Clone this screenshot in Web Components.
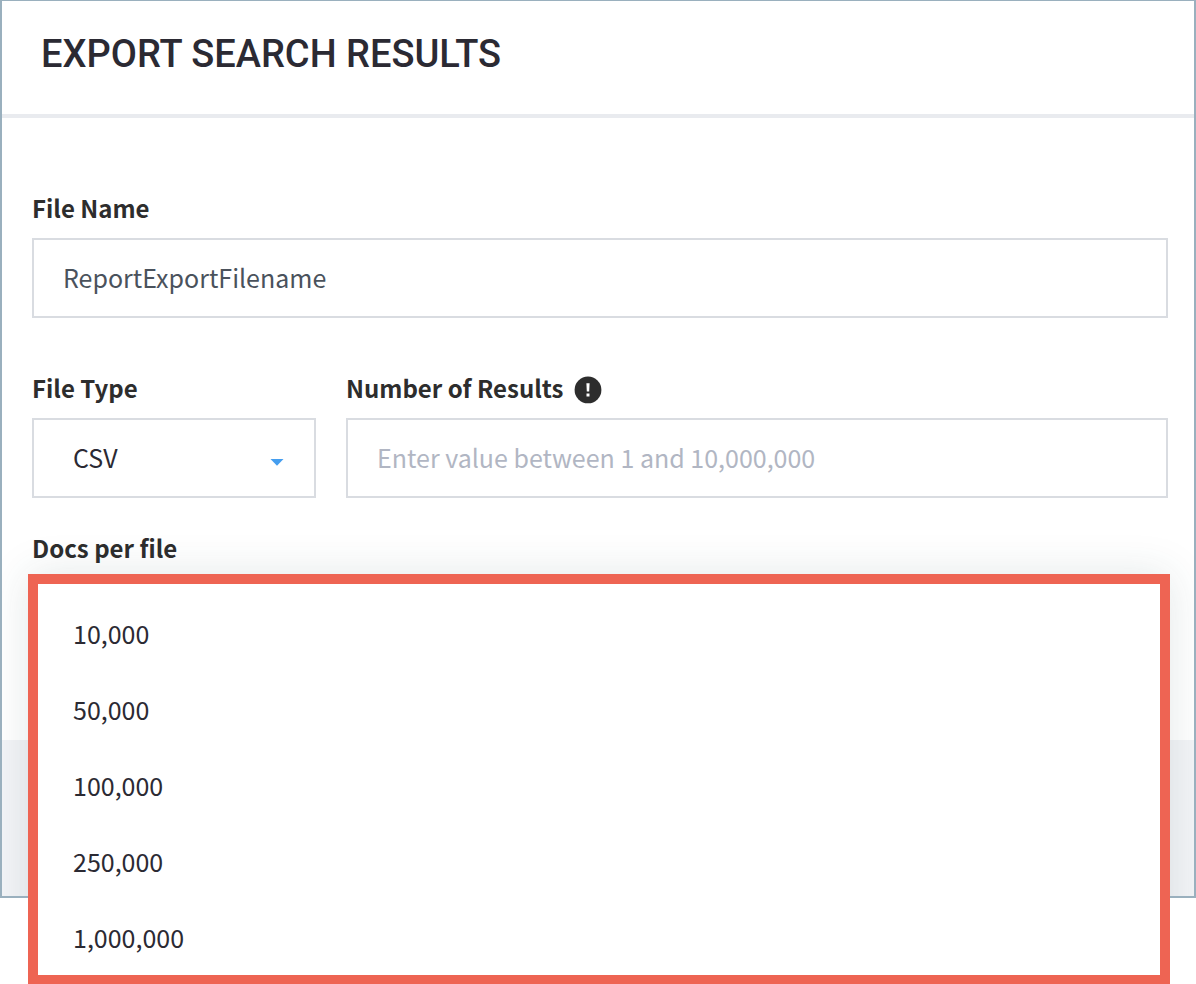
<!DOCTYPE html>
<html lang="en">
<head>
<meta charset="utf-8">
<meta name="viewport" content="width=device-width, initial-scale=1">
<title>Export Search Results</title>
<style>
  body { margin: 0; min-height: 100vh; background: #fff; color: #2b2a33; font: 400 25px/36px "Noto Sans CJK SC", "Noto Sans", sans-serif; }
</style>
</head>
<body>
<export-dialog>
  <span slot="title">EXPORT SEARCH RESULTS</span>
  <text-field label="File Name" value="ReportExportFilename"></text-field>
  <field-row>
    <select-field label="File Type" options="CSV"></select-field>
    <text-field label="Number of Results" placeholder="Enter value between 1 and 10,000,000" info></text-field>
  </field-row>
  <option-menu label="Docs per file" options="10,000|50,000|100,000|250,000|1,000,000"></option-menu>
</export-dialog>

<script>
const fieldStyles = `
  :host { display: block; min-width: 0; }
  * { box-sizing: border-box; }
  .caption { display: flex; align-items: center; gap: 11px; margin: 0 0 12px; height: 36px; }
  label, .label { color: #2d2d2d; font-size: 24px; font-weight: 700; white-space: nowrap; }
`;

customElements.define('export-dialog', class extends HTMLElement {
  connectedCallback() {
    this.attachShadow({ mode: 'open' }).innerHTML = `
      <style>
        :host { display: block; border: 2px solid #9ab0be; border-top-width: 1px; }
        header { padding: 29px 39px 36px; border-bottom: 4px solid #e9ebef; }
        h1 { margin: 0; font: 500 38px/48px Roboto, sans-serif; color: #2b2a33; }
        .body { display: flex; flex-direction: column; padding: 72px 26px 82px 30px; }
        ::slotted(field-row) { margin: 52px 0 32px; }
        footer { height: 156px; background: #f3f4f7; }
      </style>
      <header><h1><slot name="title"></slot></h1></header>
      <div class="body"><slot></slot></div>
      <footer></footer>`;
  }
});

customElements.define('field-row', class extends HTMLElement {
  connectedCallback() {
    this.attachShadow({ mode: 'open' }).innerHTML = `
      <style>:host { display: grid; grid-template-columns: 284px 1fr; gap: 30px; }</style>
      <slot></slot>`;
  }
});

customElements.define('info-icon', class extends HTMLElement {
  connectedCallback() {
    this.attachShadow({ mode: 'open' }).innerHTML = `
      <style>:host, svg { display: block; }</style>
      <svg width="28" height="32" viewBox="0 0 28 32" aria-hidden="true">
        <circle cx="14" cy="17.9" r="13.4" fill="#2d2d2d"/>
        <path d="M12.4 11.2h3.2l-.4 8.2h-2.4zM12.5 21.6h3v2.8h-3z" fill="#fff"/>
      </svg>`;
  }
});

customElements.define('text-field', class extends HTMLElement {
  connectedCallback() {
    this.attachShadow({ mode: 'open' }).innerHTML = `
      <style>${fieldStyles}
        input { display: block; width: 100%; height: 80px; margin: 0; padding: 0 29px 2px; border: 2px solid #d9dce1;
                border-radius: 0; background: #fff; color: #4a525c; font: inherit; outline: 0; }
        input::placeholder { color: #b1b6c3; opacity: 1; }
      </style>
      <div class="caption"><label for="box"></label></div>
      <input id="box" type="text">`;
    const root = this.shadowRoot, input = root.querySelector('input');
    root.querySelector('label').textContent = this.getAttribute('label');
    input.value = this.getAttribute('value') || '';
    input.placeholder = this.getAttribute('placeholder') || '';
    if (this.hasAttribute('info')) root.querySelector('.caption').append(document.createElement('info-icon'));
  }
});

customElements.define('select-field', class extends HTMLElement {
  connectedCallback() {
    this.attachShadow({ mode: 'open' }).innerHTML = `
      <style>${fieldStyles}
        .box { display: grid; align-items: center; }
        .box > * { grid-area: 1 / 1; }
        select { appearance: none; width: 100%; height: 80px; margin: 0; padding: 0 39px 2px; border: 2px solid #d9dce1;
                 border-radius: 0; background: #fff; color: #2b2a33; font: inherit; outline: 0; }
        svg { justify-self: end; margin: 8px 32px 0 0; pointer-events: none; }
      </style>
      <div class="caption"><label for="box"></label></div>
      <div class="box">
        <select id="box"></select>
        <svg width="14" height="8" viewBox="0 0 14 8" aria-hidden="true"><path d="M.5 1h13L7 7.8z" fill="#459eef"/></svg>
      </div>`;
    this.shadowRoot.querySelector('label').textContent = this.getAttribute('label');
    for (const o of this.getAttribute('options').split('|')) this.shadowRoot.querySelector('select').add(new Option(o));
  }
});

customElements.define('option-menu', class extends HTMLElement {
  connectedCallback() {
    this.attachShadow({ mode: 'open' }).innerHTML = `
      <style>${fieldStyles}
        .anchor { position: relative; height: 80px; }
        ul { position: absolute; top: -4px; left: -4px; right: -2px; z-index: 1; margin: 0; padding: 31px 25px 20px;
             display: flex; flex-direction: column; gap: 40px; list-style: none; border: 10px solid #ee6453; border-bottom-width: 9px; background: #fff; }
        .shade { position: absolute; top: -4px; left: -4px; right: -2px; height: 410px;
                 box-shadow: 0 0 40px rgba(40, 80, 80, .13); clip-path: inset(-40px -24px 88px -26px); }
        button { display: block; width: 100%; margin: 0; padding: 0 10px; border: 0; background: none; color: #2b2a33;
                 font: inherit; text-align: left; }
      </style>
      <div class="caption"><span class="label" id="name"></span></div>
      <div class="anchor"><div class="shade"></div><ul role="listbox" aria-labelledby="name"></ul></div>`;
    const root = this.shadowRoot;
    root.querySelector('.label').textContent = this.getAttribute('label');
    for (const o of this.getAttribute('options').split('|')) {
      const li = document.createElement('li'), b = document.createElement('button');
      li.setAttribute('role', 'presentation');
      b.type = 'button';
      b.setAttribute('role', 'option');
      b.textContent = o;
      li.append(b);
      root.querySelector('ul').append(li);
    }
  }
});
</script>
</body>
</html>
